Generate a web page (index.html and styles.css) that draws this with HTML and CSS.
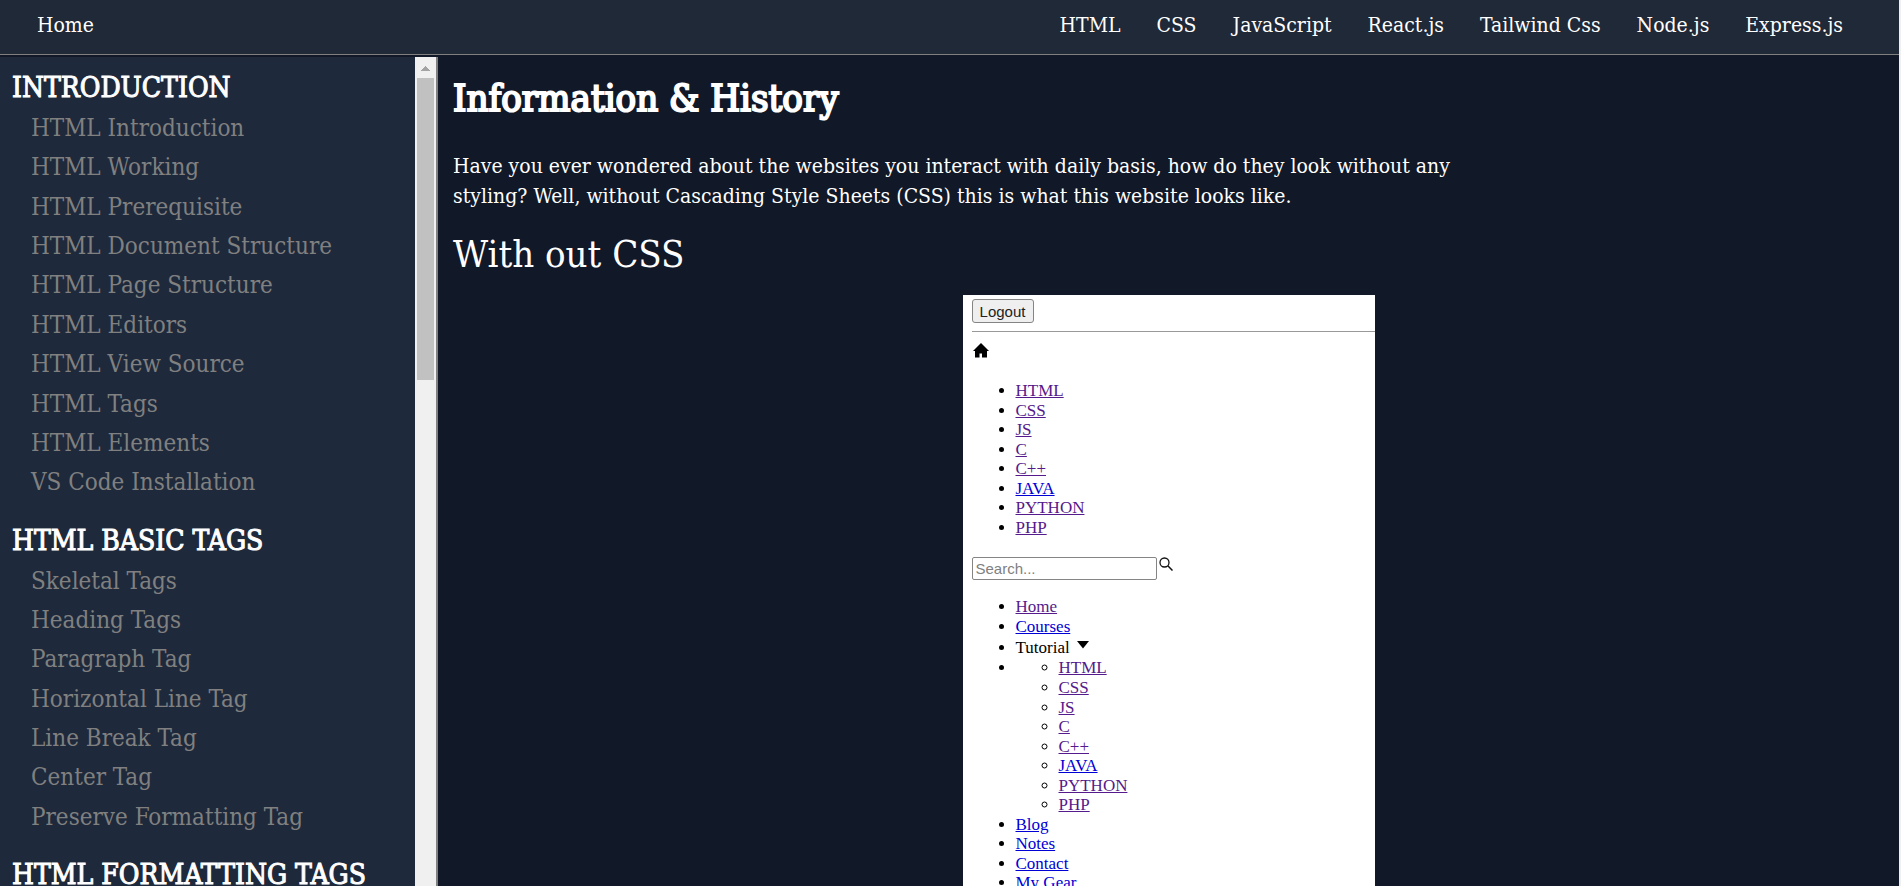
FILE: index.html
```html
<!DOCTYPE html>
<html lang="en">
<head>
<meta charset="utf-8">
<title>Information &amp; History</title>
<link rel="stylesheet" href="styles.css">
</head>
<body class="page">
<header class="topbar">
  <a class="nav-link" href="#home">Home</a>
  <nav class="nav">
    <a class="nav-link" href="#html">HTML</a>
    <a class="nav-link" href="#css">CSS</a>
    <a class="nav-link" href="#javascript">JavaScript</a>
    <a class="nav-link" href="#react">React.js</a>
    <a class="nav-link" href="#tailwind">Tailwind Css</a>
    <a class="nav-link" href="#node">Node.js</a>
    <a class="nav-link" href="#express">Express.js</a>
  </nav>
</header>
<div class="body">
  <aside class="sidebar">
    <div class="topics">
      <h2 class="topic-title">INTRODUCTION</h2>
      <ul class="topic-list">
        <li><a href="#t1">HTML Introduction</a></li>
        <li><a href="#t2">HTML Working</a></li>
        <li><a href="#t3">HTML Prerequisite</a></li>
        <li><a href="#t4">HTML Document Structure</a></li>
        <li><a href="#t5">HTML Page Structure</a></li>
        <li><a href="#t6">HTML Editors</a></li>
        <li><a href="#t7">HTML View Source</a></li>
        <li><a href="#t8">HTML Tags</a></li>
        <li><a href="#t9">HTML Elements</a></li>
        <li><a href="#t10">VS Code Installation</a></li>
      </ul>
      <h2 class="topic-title">HTML BASIC TAGS</h2>
      <ul class="topic-list">
        <li><a href="#b1">Skeletal Tags</a></li>
        <li><a href="#b2">Heading Tags</a></li>
        <li><a href="#b3">Paragraph Tag</a></li>
        <li><a href="#b4">Horizontal Line Tag</a></li>
        <li><a href="#b5">Line Break Tag</a></li>
        <li><a href="#b6">Center Tag</a></li>
        <li><a href="#b7">Preserve Formatting Tag</a></li>
      </ul>
      <h2 class="topic-title">HTML FORMATTING TAGS</h2>
    </div>
    <div class="scrollbar" aria-hidden="true">
      <svg class="scroll-up" viewBox="0 0 21 21"><path d="M6 14h9v-1h-1v-1h-1v-1h-1v-1h-1V9h-1v1H9v1H8v1H7v1H6z" fill="#a3a3a3"/></svg>
      <div class="scroll-thumb"></div>
    </div>
  </aside>
  <main class="content">
    <h1 class="title">Information &amp; History</h1>
    <p class="intro">Have you ever wondered about the websites you interact with daily basis, how do they look without any styling? Well, without Cascading Style Sheets (CSS) this is what this website looks like.</p>
    <h2 class="subtitle">With out CSS</h2>
    <div class="sample">
      <button class="logout" type="button">Logout</button>
      <hr class="rule">
      <svg class="home-icon" viewBox="0 0 16 16"><path d="M8 0L0 8h2v6.500h4.500v-4h2.500v4H14V8h2z"/></svg>
      <ul class="plain-list">
        <li><a class="visited" href="#s1">HTML</a></li>
        <li><a class="visited" href="#s2">CSS</a></li>
        <li><a class="visited" href="#s3">JS</a></li>
        <li><a class="visited" href="#s4">C</a></li>
        <li><a class="visited" href="#s5">C++</a></li>
        <li><a href="#s6">JAVA</a></li>
        <li><a class="visited" href="#s7">PYTHON</a></li>
        <li><a class="visited" href="#s8">PHP</a></li>
      </ul>
      <div class="search">
        <input class="search-box" type="text" placeholder="Search..." aria-label="Search">
        <svg class="search-icon" viewBox="0 0 14 14"><circle cx="5.500" cy="5.500" r="4.500" fill="none" stroke="#111" stroke-width="1.300"/><path d="M8.800 8.800L13.500 13.500" stroke="#111" stroke-width="1.500"/></svg>
      </div>
      <ul class="plain-list menu-list">
        <li><a class="visited" href="#m1">Home</a></li>
        <li><a href="#m2">Courses</a></li>
        <li class="tutorial">Tutorial <svg class="caret" viewBox="0 0 12 8"><path d="M0 0h12L6 7.500z"/></svg></li>
        <li>
          <ul class="nested-list">
            <li><a class="visited" href="#n1">HTML</a></li>
            <li><a class="visited" href="#n2">CSS</a></li>
            <li><a class="visited" href="#n3">JS</a></li>
            <li><a class="visited" href="#n4">C</a></li>
            <li><a class="visited" href="#n5">C++</a></li>
            <li><a href="#n6">JAVA</a></li>
            <li><a class="visited" href="#n7">PYTHON</a></li>
            <li><a class="visited" href="#n8">PHP</a></li>
          </ul>
        </li>
        <li><a href="#m3">Blog</a></li>
        <li><a href="#m4">Notes</a></li>
        <li><a href="#m5">Contact</a></li>
        <li><a href="#m6">My Gear</a></li>
      </ul>
    </div>
  </main>
</div>
</body>
</html>
```
FILE: styles.css
```css
* { box-sizing: border-box; }

.page {
  margin: 0;
  height: 100vh;
  overflow: hidden;
  display: flex;
  flex-direction: column;
  background: #111827;
  border-right: 2px solid #f0f0f0;
  color: #fff;
  font-family: "Roboto Slab", "DejaVu Serif Condensed", "DejaVu Serif", serif;
}

.topbar {
  display: flex;
  justify-content: space-between;
  flex: none;
  height: 55px;
  padding: 10px 56px 0 37px;
  background: #1f2937;
  border-bottom: 1px solid #808080;
}
.nav { display: flex; gap: 36px; }
.nav-link {
  color: #fff;
  font-size: 21px;
  line-height: 30px;
  text-decoration: none;
}

.body { display: flex; flex: 1; min-height: 0; }

.sidebar {
  display: flex;
  flex: none;
  width: 438px;
  margin-top: 2px;
  background: #1e293b;
  border-right: 2px solid #808080;
}
.topics { flex: 1; overflow: hidden; padding: 10px 0 0 12px; }
.topic-title {
  margin: 0;
  font-size: 28px;
  font-weight: 400;
  line-height: 42px;
  white-space: nowrap;
  -webkit-text-stroke: 1px #fff;
}
.topic-list {
  margin: 0 0 17px;
  padding: 0 0 0 19px;
  list-style: none;
  font-size: 24px;
  line-height: 1.64;
}
.topic-list a { color: #808080; text-decoration: none; }

.scrollbar { flex: none; width: 21px; background: #f0f0f0; }
.scroll-up { display: block; width: 21px; height: 21px; }
.scroll-thumb { height: 302px; margin: 0 2px; background: #c1c1c1; }

.content { flex: 1; min-width: 0; overflow: hidden; padding: 13px 15px 0; }
.title {
  margin: 0;
  font-size: 38px;
  font-weight: 400;
  line-height: 60px;
  -webkit-text-stroke: 2px #fff;
}
.intro {
  max-width: 1000px;
  margin: 23px 0 0;
  font-size: 21px;
  line-height: 30px;
}
.subtitle { margin: 13px 0 11px; font-size: 38px; font-weight: 400; line-height: 60px; }

.sample {
  width: 412px;
  margin: 0 auto;
  padding: 4px 0 0 9px;
  background: #fff;
  color: #000;
  font-family: "Liberation Serif", serif;
  font-size: 17px;
  line-height: 1.15;
}
.logout {
  display: block;
  width: 62px;
  height: 24px;
  padding: 0;
  background: #efefef;
  border: 1px solid #858585;
  border-radius: 3px;
  color: #222;
  font: 15px "Liberation Sans", sans-serif;
}
.rule { margin: 8px 0 0; border: 0; border-top: 1px solid #999; }
.home-icon { display: block; width: 16px; height: 16px; margin: 11px 0 0 1px; }
.plain-list { margin: 0; padding: 22px 0 20px 44px; }
.menu-list { padding-top: 17px; }
.plain-list a { color: #0000d6; }
.plain-list a.visited { color: #551a8b; }
.nested-list { margin: 0; padding: 0 0 0 43px; list-style: circle; }
.tutorial { padding-top: 2px; line-height: 20px; }
.caret { width: 12px; height: 8px; margin: 0 0 4px 3px; }
.search { display: flex; gap: 2px; }
.search-box {
  width: 185px;
  height: 23px;
  padding: 0 3px;
  background: #fff;
  border: 1px solid #858585;
  border-radius: 2px;
  font: 15px "Liberation Sans", sans-serif;
}
.search-box::placeholder { color: #808080; }
.search-icon { width: 14px; height: 14px; }
```
